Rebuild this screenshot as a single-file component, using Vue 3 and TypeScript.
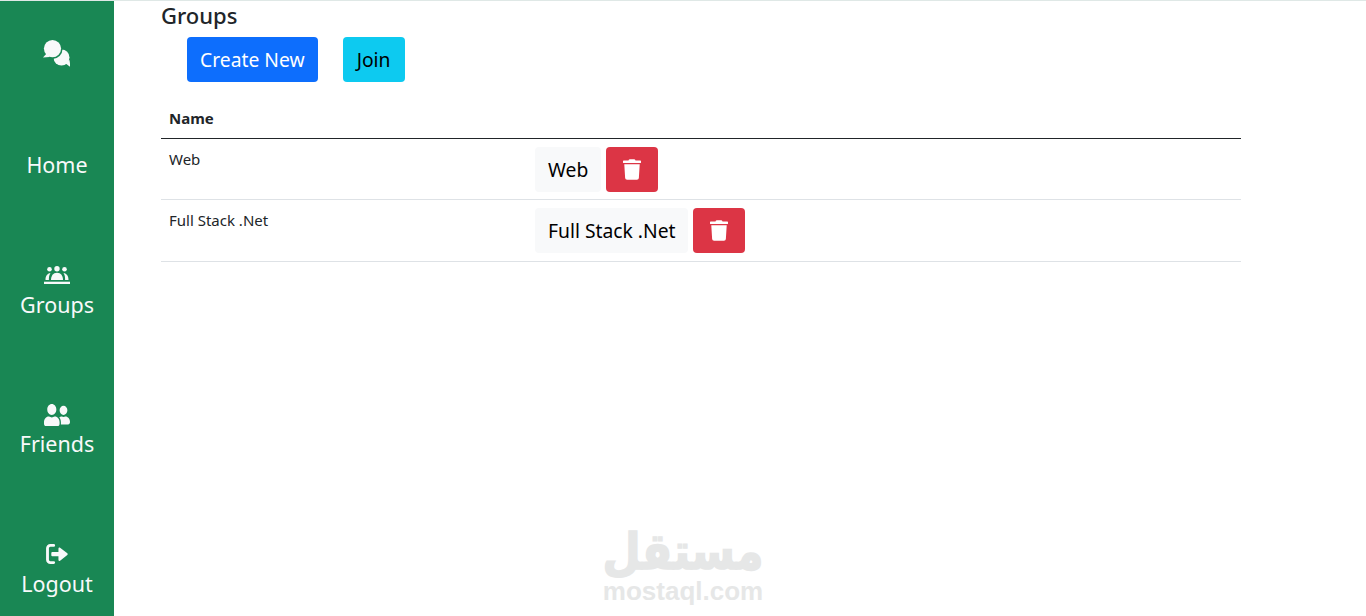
<template>
  <div class="page">
    <aside class="sidebar">
      <div class="brand">
        <svg class="icon-chat" viewBox="0 0 27 27">
          <circle cx="18.5" cy="17.5" r="8" fill="#f8f9fa" />
          <path d="M22 23l5.5 4-1-7z" fill="#f8f9fa" />
          <circle cx="9.5" cy="9" r="10" fill="#198754" />
          <circle cx="9.5" cy="8.6" r="8.6" fill="#f8f9fa" />
          <path d="M4 13L0 17.6l6.5-.6z" fill="#f8f9fa" />
        </svg>
      </div>
      <a class="nav-item home">Home</a>
      <a class="nav-item">
        <svg class="icon-groups" viewBox="0 0 26 18">
          <circle cx="5.5" cy="3.3" r="2.3" />
          <circle cx="13" cy="2.7" r="2.7" />
          <circle cx="20.5" cy="3.3" r="2.3" />
          <path d="M1.5 14c0-4 1.600-6.500 5-7-1.200 1.800-1.700 4-1.600 7z" />
          <path d="M7 14c0-4 2-7.200 6-7.200s6 3.200 6 7.200z" />
          <path d="M24.500 14c0-4-1.600-6.500-5-7 1.200 1.800 1.700 4 1.600 7z" />
          <rect x="0" y="15.700" width="26" height="2.300" />
        </svg>
        <span>Groups</span>
      </a>
      <a class="nav-item">
        <svg class="icon-friends" viewBox="0 30 640 450" preserveAspectRatio="none">
          <path d="M192 256c61.900 0 112-50.100 112-112S253.900 32 192 32 80 82.100 80 144s50.100 112 112 112zm76.800 32h-8.300c-20.800 10-43.900 16-68.500 16s-47.600-6-68.500-16h-8.300C51.600 288 0 339.600 0 403.200V432c0 26.500 21.500 48 48 48h288c26.500 0 48-21.500 48-48v-28.800c0-63.600-51.600-115.200-115.200-115.200zM480 256c53 0 96-43 96-96s-43-96-96-96-96 43-96 96 43 96 96 96zm48 32h-3.800c-13.900 4.800-28.600 8-44.200 8s-30.300-3.200-44.200-8H432c-20.400 0-39.200 5.900-55.700 15.400 24.400 26.300 39.700 61.200 39.700 99.800v38.400c0 2.200-.5 4.300-.6 6.400H592c26.500 0 48-21.500 48-48 0-61.900-50.100-112-112-112z" />
        </svg>
        <span>Friends</span>
      </a>
      <a class="nav-item">
        <svg class="icon-logout" viewBox="0 0 24 21">
          <path d="M8 1.500H4.500A3 3 0 0 0 1.500 4.500v12a3 3 0 0 0 3 3H8" class="bracket" />
          <path d="M6.500 8.500h6.500V4.600c0-.9 1-1.300 1.700-.7l7.600 5.900c.6.500.6 1.300 0 1.800l-7.600 5.900c-.7.600-1.700.2-1.700-.7v-3.900H6.500c-.6 0-1-.4-1-1V9.500c0-.6.400-1 1-1z" />
        </svg>
        <span>Logout</span>
      </a>
    </aside>

    <main class="content">
      <h2 class="title">Groups</h2>
      <div class="actions">
        <button class="btn btn-primary">Create New</button>
        <button class="btn btn-info">Join</button>
      </div>
      <div class="table">
        <div class="row head">
          <div class="cell name">Name</div>
        </div>
        <div class="row" v-for="group in groups" :key="group">
          <div class="cell name">{{ group }}</div>
          <div class="cell buttons">
            <button class="btn btn-light">{{ group }}</button>
            <button class="btn btn-danger" aria-label="Delete">
              <svg class="icon-trash" viewBox="0 0 448 512">
                <path d="M432 32H312l-9.400-18.700A24 24 0 0 0 281.100 0H166.800a23.720 23.720 0 0 0-21.400 13.300L136 32H16A16 16 0 0 0 0 48v32a16 16 0 0 0 16 16h416a16 16 0 0 0 16-16V48a16 16 0 0 0-16-16zM53.200 467a48 48 0 0 0 47.900 45h245.800a48 48 0 0 0 47.900-45L416 128H32z" />
              </svg>
            </button>
          </div>
        </div>
      </div>
    </main>

    <div class="watermark">
      <span class="wm-ar" lang="ar" dir="rtl">مستقل</span>
      <span class="wm-en">mostaql.com</span>
    </div>
  </div>
</template>

<script setup lang="ts">
const groups: string[] = ["Web", "Full Stack .Net"];
</script>

<style>
html,
body {
  margin: 0;
  background: #fff;
}
</style>

<style scoped>
.page {
  display: flex;
  height: 616px;
  overflow: hidden;
  box-sizing: border-box;
  border-top: 1px solid #dfe8e6;
  font-family: "Noto Sans", "Open Sans", sans-serif;
  color: #212529;
  position: relative;
}

.sidebar {
  width: 114px;
  flex: none;
  background: #198754;
  display: flex;
  flex-direction: column;
  align-items: center;
}

.brand {
  height: 39px;
  padding-top: 39px;
  margin-left: -1px;
}

.icon-chat {
  display: block;
  width: 27px;
  height: 27px;
}

.nav-item {
  height: 139.5px;
  width: 100%;
  display: flex;
  flex-direction: column;
  align-items: center;
  justify-content: flex-end;
  color: #f8f9fa;
  font-size: 21.5px;
  line-height: 30px;
}

.nav-item svg {
  fill: #f8f9fa;
  display: block;
}

.bracket {
  fill: none;
  stroke: #f8f9fa;
  stroke-width: 3;
  stroke-linecap: round;
}

.home {
  height: 101px;
}

.icon-groups {
  width: 26px;
  height: 18px;
  margin-bottom: 6px;
}

.icon-friends {
  width: 26px;
  height: 22px;
  margin-bottom: 3px;
}

.icon-logout {
  width: 23px;
  height: 20px;
  margin-bottom: 5px;
}

.content {
  flex: 1;
  padding-left: 47px;
  min-width: 0;
}

.title {
  margin: -1px 0 1px;
  font-size: 22px;
  font-weight: 500;
  line-height: 30px;
}

.actions {
  display: flex;
  gap: 25px;
  padding: 6px 0 0 26px;
}

.btn {
  border: 0;
  border-radius: 4px;
  height: 45px;
  padding: 0 13px;
  font-family: inherit;
  font-size: 19.300px;
  display: flex;
  align-items: center;
  justify-content: center;
  color: #000;
}

.btn-primary {
  background: #0d6efd;
  color: #fff;
}

.btn-info {
  background: #0dcaf0;
  width: 62px;
}

.btn-light {
  background: #f8f9fa;
  min-width: 66px;
}

.btn-danger {
  background: #dc3545;
  width: 52px;
}

.table {
  width: 1080px;
  margin-top: 15px;
}

.row {
  display: flex;
  border-bottom: 1px solid #dee2e6;
}

.head {
  height: 41px;
  border-bottom-color: #212529;
  font-weight: 700;
  align-items: center;
}

.row:nth-child(2) {
  height: 60px;
}

.row:nth-child(3) {
  height: 61px;
}

.cell {
  font-size: 15px;
  line-height: 22px;
  box-sizing: border-box;
}

.name {
  width: 374px;
  padding: 9px 8px 0;
}

.head .name {
  padding-top: 0;
}

.buttons {
  display: flex;
  gap: 5px;
  padding-top: 8px;
}

.icon-trash {
  width: 18px;
  height: 21px;
  fill: #fff;
}

.watermark {
  position: absolute;
  left: 603px;
  top: 529px;
  width: 160px;
  display: flex;
  flex-direction: column;
  align-items: center;
  color: #e6e7e7;
  pointer-events: none;
}

.wm-ar {
  font-family: "DejaVu Sans", sans-serif;
  font-weight: 700;
  font-size: 44px;
  line-height: 44px;
  margin-bottom: 6px;
  -webkit-text-stroke: 1.5px #e6e7e7;
  transform: scaleY(1.15);
}

.wm-en {
  font-family: "Liberation Sans", sans-serif;
  font-weight: 700;
  font-size: 26px;
  line-height: 22px;
}
</style>
